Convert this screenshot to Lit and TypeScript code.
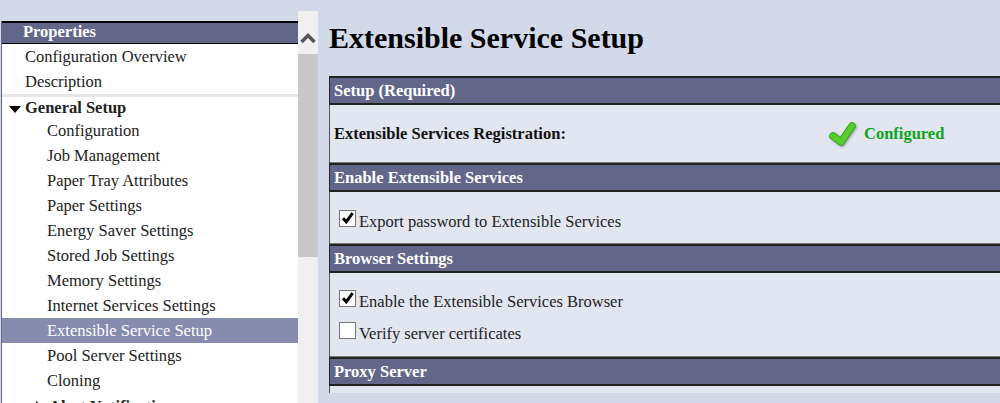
import { LitElement, html, css, svg } from "lit";
import { customElement } from "lit/decorators.js";

const setupItems = [
  "Configuration",
  "Job Management",
  "Paper Tray Attributes",
  "Paper Settings",
  "Energy Saver Settings",
  "Stored Job Settings",
  "Memory Settings",
  "Internet Services Settings",
  "Extensible Service Setup",
  "Pool Server Settings",
  "Cloning",
];

const tick = svg`<path d="M2.800 6.800 5.800 10.200 11.800 2" fill="none" stroke="#000" stroke-width="2.800" />`;

@customElement("app-root")
export class AppRoot extends LitElement {
  static styles = css`
    :host {
      display: block;
      height: 403px;
      overflow: hidden;
      background: #d2d9e8;
      font-family: "Liberation Serif", "Times New Roman", serif;
      font-size: 16.5px;
      color: #222;
    }
    .page {
      display: flex;
      height: 403px;
      padding-left: 1px;
      box-sizing: border-box;
    }
    .nav {
      width: 297px;
      flex: none;
      margin-top: 21px;
      background: #fff;
      overflow: hidden;
      border-left: 1px solid #62678a;
      box-sizing: border-box;
    }
    .nav-title {
      height: 23px;
      margin-left: -1px;
      box-sizing: border-box;
      border: 1px solid #000;
      border-right: 0;
      border-top-width: 2px;
      background: #62678a;
      color: #fff;
      font-weight: bold;
      line-height: 18px;
      padding-left: 21px;
    }
    .row {
      height: 25px;
      line-height: 26px;
      white-space: nowrap;
    }
    .top {
      padding-left: 23px;
    }
    .sep {
      height: 3px;
      background: #e6e6e6;
    }
    .group {
      display: flex;
      align-items: center;
      height: 21px;
      padding-left: 7px;
      font-weight: bold;
      white-space: nowrap;
    }
    .group svg {
      width: 12px;
      height: 7px;
      margin: 4px 4px 0 0;
    }
    .child {
      padding-left: 45px;
    }
    .child.active {
      background: #868cae;
      color: #fff;
    }
    .group.alert {
      padding-left: 34px;
      height: 28px;
    }
    .group.alert svg {
      width: 7px;
      height: 12px;
      margin: 0 6px 0 0;
    }
    .scrollbar {
      width: 20px;
      flex: none;
      margin-top: 11px;
      background: #f0f0f0;
      display: flex;
      flex-direction: column;
    }
    .arrow {
      height: 43px;
      display: flex;
      align-items: flex-start;
      justify-content: center;
      padding-top: 21px;
      box-sizing: border-box;
    }
    .arrow svg {
      width: 16px;
      height: 12px;
    }
    .thumb {
      height: 203px;
      background: #c8c8c8;
    }
    .main {
      flex: 1;
      min-width: 0;
      margin-left: 11px;
    }
    h1 {
      margin: 0;
      height: 76px;
      padding-top: 21px;
      box-sizing: border-box;
      font-size: 30px;
      line-height: 34px;
      font-weight: bold;
      color: #000;
    }
    .panel {
      width: 700px;
      background: #e2e6f1;
      border-left: 1px solid #555;
    }
    .head {
      height: 29px;
      box-sizing: border-box;
      margin-left: -1px;
      border-top: 2px solid #222;
      border-bottom: 2px solid #222;
      border-left: 1px solid #222;
      background: #62678a;
      color: #fff;
      font-weight: bold;
      line-height: 26px;
      padding-left: 4px;
    }
    .body {
      box-sizing: border-box;
      padding-left: 9px;
      border-bottom: 1px solid #777;
    }
    .body.status {
      height: 58px;
      display: flex;
      align-items: center;
      padding-left: 4px;
      font-weight: bold;
      color: #111;
    }
    .status .label {
      width: 493px;
    }
    .status .ok {
      display: flex;
      align-items: center;
      gap: 6px;
      color: #0ca51c;
    }
    .status svg {
      width: 31px;
      height: 26px;
      filter: drop-shadow(1px 1px 1px rgba(40, 60, 40, 0.45));
    }
    .body.one {
      height: 52px;
      padding-top: 18px;
    }
    .body.two {
      height: 84px;
      padding-top: 17px;
    }
    .body.tail {
      height: 7px;
      border-bottom: 0;
    }
    .check {
      display: flex;
      align-items: center;
      height: 24px;
      gap: 3px;
    }
    .check + .check {
      margin-top: 8px;
    }
    .box {
      width: 17px;
      height: 17px;
      margin-bottom: 7px;
      box-sizing: border-box;
      border: 1px solid #777;
      background: #fff;
      flex: none;
    }
    .box svg {
      display: block;
      width: 15px;
      height: 15px;
    }
  `;

  box(checked: boolean) {
    return html`<span class="box">
      ${checked ? html`<svg viewBox="0 0 14 14">${tick}</svg>` : ""}
    </span>`;
  }

  render() {
    return html`
      <div class="page">
        <div class="nav">
          <div class="nav-title">Properties</div>
          <div class="row top">Configuration Overview</div>
          <div class="row top">Description</div>
          <div class="sep"></div>
          <div class="group">
            <svg viewBox="0 0 12 7"><path d="M0 0h12L6 7z" fill="#000" /></svg>
            General Setup
          </div>
          ${setupItems.map(
            (item) => html`
              <div class="row child ${item === "Extensible Service Setup" ? "active" : ""}">
                ${item}
              </div>
            `
          )}
          <div class="group alert">
            <svg viewBox="0 0 7 12"><path d="M0 0l7 6-7 6z" fill="#000" /></svg>
            Alert Notifications
          </div>
        </div>
        <div class="scrollbar">
          <div class="arrow">
            <svg viewBox="0 0 16 12">
              <path d="M1.500 10 8 3.500 14.500 10" fill="none" stroke="#555" stroke-width="3.500" />
            </svg>
          </div>
          <div class="thumb"></div>
        </div>
        <div class="main">
          <h1>Extensible Service Setup</h1>
          <div class="panel">
            <div class="head">Setup (Required)</div>
            <div class="body status">
              <span class="label">Extensible Services Registration:</span>
              <span class="ok">
                <svg viewBox="0 0 31 26">
                  <path d="M6 15 14 21 25 5" fill="none" stroke="#3a9f1e" stroke-width="7.500" stroke-linejoin="round" stroke-linecap="round" />
                  <path d="M6 15 14 21 25 5" fill="none" stroke="#55cf2b" stroke-width="5.500" stroke-linejoin="round" stroke-linecap="round" />
                </svg>
                Configured
              </span>
            </div>
            <div class="head">Enable Extensible Services</div>
            <div class="body one">
              <label class="check">${this.box(true)} Export password to Extensible Services</label>
            </div>
            <div class="head">Browser Settings</div>
            <div class="body two">
              <label class="check">${this.box(true)} Enable the Extensible Services Browser</label>
              <label class="check">${this.box(false)} Verify server certificates</label>
            </div>
            <div class="head">Proxy Server</div>
            <div class="body tail"></div>
          </div>
        </div>
      </div>
    `;
  }
}
